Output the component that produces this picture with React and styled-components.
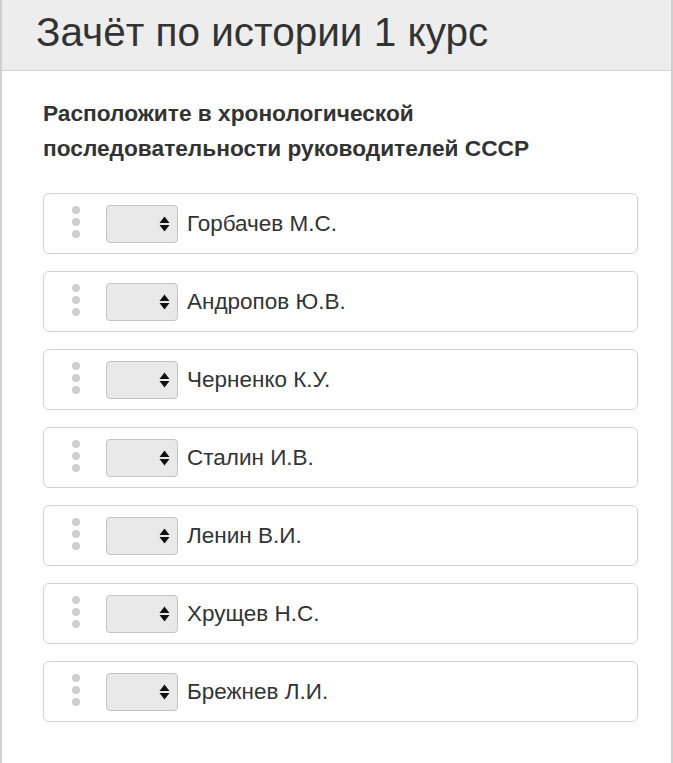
import React from "react";
import styled, { createGlobalStyle } from "styled-components";

const Global = createGlobalStyle`
  html, body { margin: 0; padding: 0; background: #fff; }
  body { font-family: "Liberation Sans", Arial, sans-serif; color: #333; }
`;

const Panel = styled.div`
  box-sizing: border-box;
  width: 673px;
  min-height: 763px;
  border-left: 2px solid #d0d0d0;
  border-right: 2px solid #d0d0d0;
  background: #fff;
`;

const Header = styled.div`
  box-sizing: border-box;
  height: 71px;
  background: #ededed;
  border-bottom: 1px solid #d4d4d4;
  padding: 9px 0 0 34px;
`;

const Title = styled.h1`
  margin: 0;
  font-family: "Liberation Sans", Arial, sans-serif;
  font-size: 40.5px;
  font-weight: 400;
  line-height: 46px;
  color: #333;
`;

const Body = styled.div`
  padding: 25px 33px 0 41px;
`;

const Question = styled.p`
  margin: 0 0 27px;
  font-family: "Liberation Sans", Arial, sans-serif;
  font-size: 22.7px;
  font-weight: 700;
  line-height: 35px;
  color: #333;
`;

const List = styled.div`
  display: flex;
  flex-direction: column;
  gap: 17px;
`;

const Row = styled.div`
  box-sizing: border-box;
  height: 61px;
  border: 1.5px solid #d2d2d2;
  border-radius: 6px;
  display: flex;
  align-items: center;
  padding-left: 28px;
`;

const Handle = styled.div`
  display: flex;
  flex-direction: column;
  gap: 4px;
  margin-right: 26px;
  margin-top: -3px;
`;

const Dot = styled.span`
  width: 8px;
  height: 8px;
  border-radius: 50%;
  background: #cfcfcf;
`;

const Select = styled.div`
  box-sizing: border-box;
  width: 72px;
  height: 38px;
  background: #e9e9e9;
  border: 1.5px solid #c4c4c4;
  border-radius: 4px;
  display: flex;
  align-items: center;
  justify-content: flex-end;
  padding-right: 7px;
`;

const Label = styled.span`
  margin-left: 9px;
  font-family: "Liberation Sans", Arial, sans-serif;
  font-size: 22.5px;
  color: #333;
`;

const Arrows = () => (
  <svg width="11" height="16" viewBox="0 0 11 16">
    <path d="M5.5 0.5 L10.5 7 L0.5 7 Z" fill="#111" />
    <path d="M5.5 15.5 L10.5 9 L0.5 9 Z" fill="#111" />
  </svg>
);

const names = [
  "Горбачев М.С.",
  "Андропов Ю.В.",
  "Черненко К.У.",
  "Сталин И.В.",
  "Ленин В.И.",
  "Хрущев Н.С.",
  "Брежнев Л.И.",
];

export default function App() {
  return (
    <>
      <Global />
      <Panel>
        <Header>
          <Title>Зачёт по истории 1 курс</Title>
        </Header>
        <Body>
          <Question>
            Расположите в хронологической
            <br />
            последовательности руководителей СССР
          </Question>
          <List>
            {names.map((n) => (
              <Row key={n}>
                <Handle>
                  <Dot />
                  <Dot />
                  <Dot />
                </Handle>
                <Select>
                  <Arrows />
                </Select>
                <Label>{n}</Label>
              </Row>
            ))}
          </List>
        </Body>
      </Panel>
    </>
  );
}
